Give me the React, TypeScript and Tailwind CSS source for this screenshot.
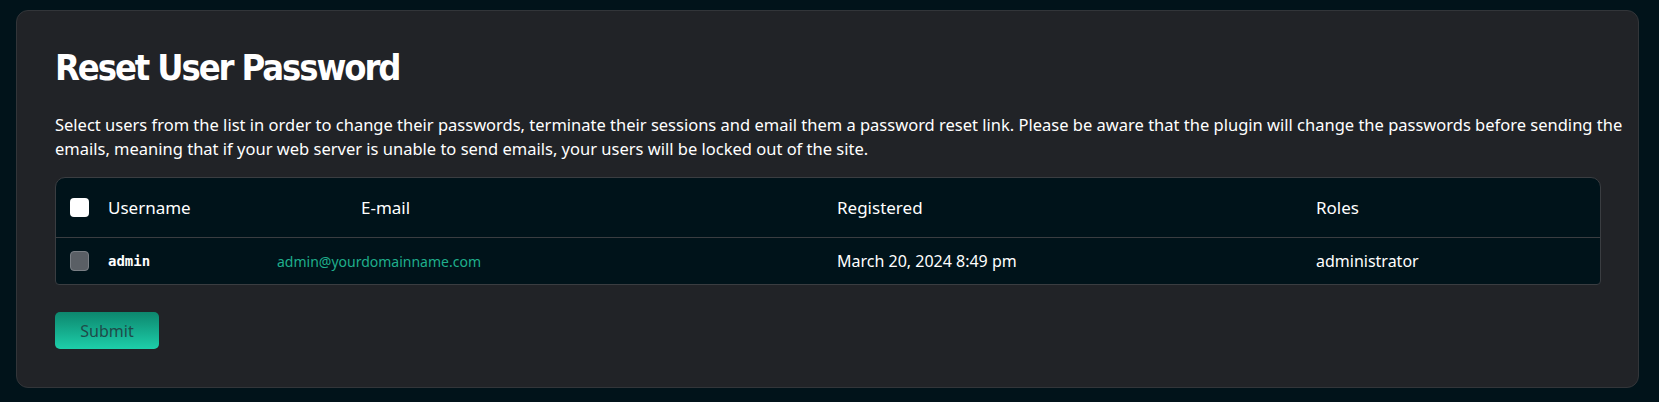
import React from "react";

const body = { fontFamily: '"Noto Sans", "Open Sans", sans-serif' };

export default function App() {
  return (
    <div className="min-h-[402px] w-full bg-[#01131a] pt-[10px] pb-[14px] pl-[16px] pr-[20px]" style={body}>
      <div className="rounded-[12px] border border-[#323539] bg-[#212327] pl-[38px] pr-[14px] pt-[34px] pb-[38px] text-white">
        <h1
          className="text-[36px] font-bold leading-[46px] tracking-[-2.1px] text-white"
          style={{ fontFamily: '"DejaVu Sans Condensed", Roboto, sans-serif' }}
        >
          Reset User Password
        </h1>
        <p className="mt-[22px] text-[16.5px] leading-[24px] text-white">
          Select users from the list in order to change their passwords, terminate their sessions and email them a password reset link. Please be aware that the plugin will change the passwords before sending the emails, meaning that if your web server is unable to send emails, your users will be locked out of the site.
        </p>
        <div className="mr-[23px] mt-[16px] overflow-hidden rounded-t-[10px] rounded-b-[4px] border border-[#3a3d41] bg-[#00131a]">
          <div className="flex h-[60px] items-center border-b border-[#3a3d41] pl-[14px] text-[17px]">
            <div className="h-[19px] w-[19px] rounded-[4px] bg-white" />
            <div className="ml-[19px] w-[253px]">Username</div>
            <div className="w-[476px]">E-mail</div>
            <div className="w-[479px]">Registered</div>
            <div>Roles</div>
          </div>
          <div className="flex h-[46px] items-center pl-[14px] text-[16px]">
            <div className="h-[20px] w-[19px] rounded-[4px] border border-[#7a7f85] bg-[#5a5f65]" />
            <div
              className="ml-[19px] w-[169px] text-[14px] font-bold"
              style={{ fontFamily: '"DejaVu Sans Mono", "Liberation Mono", monospace' }}
            >
              admin
            </div>
            <div className="w-[560px] text-[14px] text-[#1fae8c]">admin@yourdomainname.com</div>
            <div className="w-[479px]">March 20, 2024 8:49 pm</div>
            <div>administrator</div>
          </div>
        </div>
        <button className="mt-[27px] h-[37px] w-[104px] rounded-[5px] bg-gradient-to-b from-[#0d876e] to-[#1dcfaa] text-[16px] text-[#1f4b49]">
          Submit
        </button>
      </div>
    </div>
  );
}
